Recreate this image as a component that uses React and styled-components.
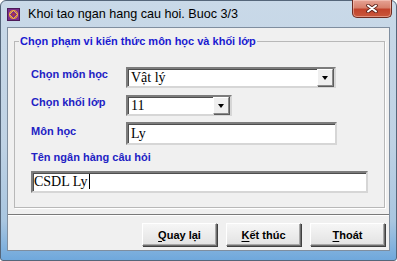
import React from 'react';
import styled, {createGlobalStyle} from 'styled-components';

const GlobalStyle = createGlobalStyle`
  html, body {
    margin: 0;
    padding: 0;
    background: #ffffff;
  }
  body {
    width: 397px;
    height: 261px;
    overflow: hidden;
    font-family: "Liberation Sans", Arial, sans-serif;
  }
`;

const Window = styled.div`
  box-sizing: border-box;
  width: 397px;
  height: 261px;
  display: flex;
  flex-direction: column;
  padding: 0 6px 9px 6px;
  border: 1px solid #55667a;
  border-radius: 6px 6px 3px 3px;
  background: linear-gradient(to bottom, #c9d9e8 0%, #bfd2e4 55%, #a9c6e0 85%, #6fa8dc 100%);
`;

const TitleBar = styled.div`
  height: 26px;
  display: flex;
  align-items: center;
  gap: 8px;
`;

const Title = styled.span`
  font-family: "Liberation Sans", Arial, sans-serif;
  font-size: 12.6px;
  color: #000;
  padding-bottom: 1px;
`;

const CloseButton = styled.div`
  align-self: flex-start;
  margin: -1px -2px 0 auto;
  width: 40px;
  height: 18px;
  display: flex;
  align-items: center;
  justify-content: center;
  box-sizing: border-box;
  border: 1px solid #6d2b22;
  border-top: none;
  border-radius: 0 0 5px 5px;
  background: linear-gradient(to bottom, #e6a395 0%, #d7806c 45%, #c2432c 55%, #c9573c 100%);
  box-shadow: inset 0 0 0 1px rgba(255, 220, 210, 0.45);
`;

const Client = styled.div`
  flex: 1;
  display: flex;
  flex-direction: column;
  background: #f0f0f0;
  border: 1px solid #7f8e9f;
`;

const GroupBox = styled.fieldset`
  margin: 7px 4px 0 6px;
  padding: 0 0 14px 0;
  min-inline-size: 0;
  border: 1px solid #b8b8b8;
  box-shadow: 1px 1px 0 #ffffff;
`;

const Legend = styled.legend`
  margin-left: 4px;
  padding: 0 1px;
  font-size: 11px;
  line-height: 13px;
  font-weight: bold;
  color: #1a1ad0;
`;

const Form = styled.div`
  display: flex;
  flex-direction: column;
  padding: 19px 0 0 16px;
`;

const Row = styled.div`
  display: flex;
  align-items: flex-start;
  margin-top: ${p => p.$gap || 0}px;
`;

const Label = styled.div`
  width: 95px;
  flex: none;
  padding-top: ${p => p.$offset || 0}px;
  font-size: 11px;
  line-height: 13px;
  font-weight: bold;
  color: #2222c4;
`;

const Field = styled.div`
  box-sizing: border-box;
  width: ${p => p.$width}px;
  height: ${p => p.$height || 21}px;
  display: flex;
  align-items: center;
  background: #ffffff;
  border: 2px solid;
  border-color: #7c7c7c #d6d6d6 #d6d6d6 #7c7c7c;
  box-shadow: inset 1px 1px 0 #4e4e4e;
  font-family: "Liberation Serif", "Times New Roman", serif;
  font-size: 14px;
  color: #000;
`;

const Value = styled.span`
  flex: 1;
  padding-left: ${p => p.$pad || 3}px;
  white-space: nowrap;
`;

const Caret = styled.span`
  display: inline-block;
  width: 1px;
  height: 15px;
  margin-left: 1px;
  background: #000;
  vertical-align: -3px;
`;

const ArrowButton = styled.div`
  box-sizing: border-box;
  width: 16px;
  height: 100%;
  display: flex;
  align-items: center;
  justify-content: center;
  background: #efefef;
  border: 1px solid;
  border-color: #ffffff #8a8a8a #8a8a8a #ffffff;
  box-shadow: 1px 1px 0 #5c5c5c;
  margin-right: 1px;

  &::after {
    content: "";
    border-left: 3px solid transparent;
    border-right: 3px solid transparent;
    border-top: 4px solid #000;
    margin-top: 1px;
  }
`;

const NameLabel = styled(Label)`
  width: auto;
  margin-top: 6px;
`;

const Separator = styled.div`
  margin-top: 6px;
  height: 0;
  border-top: 1px solid #7a7a7a;
  border-bottom: 1px solid #ffffff;
`;

const ButtonBar = styled.div`
  display: flex;
  justify-content: flex-end;
  gap: 9px;
  margin-top: 7px;
  padding-right: 4px;
`;

const Button = styled.div`
  box-sizing: border-box;
  width: 75px;
  height: 23px;
  display: flex;
  align-items: center;
  justify-content: center;
  border: 1px solid;
  border-color: #ffffff #6e6e6e #6e6e6e #ffffff;
  box-shadow: 1px 1px 0 #404040, inset -1px -1px 0 #a8a8a8;
  background: linear-gradient(to bottom, #f6f6f6 0%, #ececec 50%, #e2e2e2 100%);
  font-size: 11px;
  font-weight: bold;
  color: #000;

  u {
    text-underline-offset: 2px;
  }
`;

const AppIcon = () => (
    <svg width="13" height="13" viewBox="0 0 13 13">
        <rect x="0.5" y="0.5" width="12" height="12" fill="#7c2f8c" stroke="#4c1a58"/>
        <circle cx="6.5" cy="6.5" r="4" fill="none" stroke="#e8a23a" strokeWidth="1.2"/>
        <path d="M6.5 2.5 L10.5 6.5 L6.5 10.5 L2.5 6.5 Z" fill="none" stroke="#f4c050" strokeWidth="0.9"/>
        <circle cx="6.5" cy="6.5" r="1.3" fill="#c0392b"/>
    </svg>
);

const CloseIcon = () => (
    <svg width="12" height="9" viewBox="0 0 12 9">
        <path d="M2 1.5 L10 7.5 M10 1.5 L2 7.5" stroke="#5a2018" strokeWidth="3.6" strokeLinecap="round"/>
        <path d="M2 1.5 L10 7.5 M10 1.5 L2 7.5" stroke="#ffffff" strokeWidth="2" strokeLinecap="round"/>
    </svg>
);

export default function App() {
    return (
        <>
            <GlobalStyle/>
            <Window>
                <TitleBar>
                    <AppIcon/>
                    <Title>Khoi tao ngan hang cau hoi. Buoc 3/3</Title>
                    <CloseButton><CloseIcon/></CloseButton>
                </TitleBar>
                <Client>
                    <GroupBox>
                        <Legend>Chọn phạm vi kiến thức môn học và khối lớp</Legend>
                        <Form>
                            <Row>
                                <Label $offset={1}>Chọn môn học</Label>
                                <Field $width={210}>
                                    <Value>Vật lý</Value>
                                    <ArrowButton/>
                                </Field>
                            </Row>
                            <Row $gap={7}>
                                <Label $offset={1}>Chọn khối lớp</Label>
                                <Field $width={106}>
                                    <Value>11</Value>
                                    <ArrowButton/>
                                </Field>
                            </Row>
                            <Row $gap={6}>
                                <Label $offset={3}>Môn học</Label>
                                <Field $width={211} $height={23}>
                                    <Value>Ly</Value>
                                </Field>
                            </Row>
                            <NameLabel>Tên ngân hàng câu hỏi</NameLabel>
                            <Row $gap={7}>
                                <Field $width={337} $height={22}>
                                    <Value $pad={1}>CSDL Ly<Caret/></Value>
                                </Field>
                            </Row>
                        </Form>
                    </GroupBox>
                    <Separator/>
                    <ButtonBar>
                        <Button><span><u>Q</u>uay lại</span></Button>
                        <Button><span><u>K</u>ết thúc</span></Button>
                        <Button><span><u>T</u>hoát</span></Button>
                    </ButtonBar>
                </Client>
            </Window>
        </>
    );
}
